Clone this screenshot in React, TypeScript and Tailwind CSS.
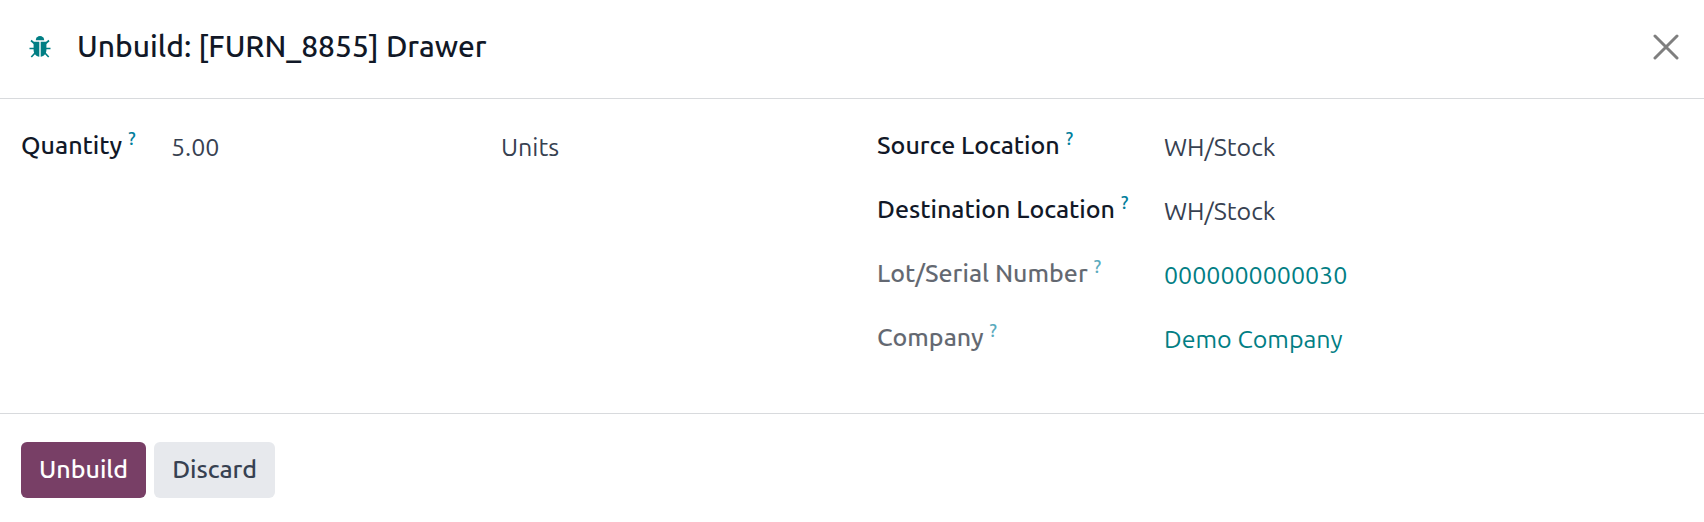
import type { ReactNode } from "react";

function FieldLabel({ htmlFor, muted, children }: { htmlFor: string; muted?: boolean; children: ReactNode }) {
  return (
    <div className={"flex items-start gap-1.5 whitespace-nowrap " + (muted ? "opacity-65" : "")}>
      <label htmlFor={htmlFor} className="text-[25px] leading-8 font-medium text-[#111827]">
        {children}
      </label>
      <sup className="top-0 text-lg leading-[18px] font-medium text-[#017e9c]">?</sup>
    </div>
  );
}

const valueClass = "block h-9 w-full min-w-0 bg-transparent p-0 text-[25px] leading-9 text-[#374151] outline-none";
const linkClass = "text-[25px] leading-9 text-[#017e84]";

export default function App() {
  return (
    <div role="dialog" aria-labelledby="dialog-title" className="bg-white font-['Ubuntu','Noto_Sans',sans-serif]">
      <header className="flex items-center justify-between border-b border-[#d8dadd] px-[21px] pt-[22px] pb-[26px]">
        <div className="flex items-center">
          <button type="button" aria-label="Debug" className="flex w-[38px] justify-center text-[#017e84]">
            <svg viewBox="0 0 22 22" className="h-[22px] w-[22px]" fill="currentColor" aria-hidden="true">
              <path d="M6.8 4.2a4.2 4.2 0 0 1 8.4 0z" />
              <path d="M4.6 5.700H10.3v15C7 20.500 4.600 17.500 4.600 14zM11.700 5.700h5.700v8.300c0 3.500-2.400 6.500-5.700 6.700z" />
              <path
                d="M2 4.500 6 8M20 4.500 16 8M0.500 12.500H6M21.500 12.500H16M2.300 21 6.500 16.500M19.700 21 15.500 16.500"
                fill="none"
                stroke="currentColor"
                strokeWidth="1.700"
              />
            </svg>
          </button>
          <h1 id="dialog-title" className="pb-0.5 pl-[18px] text-[30px] leading-[48px] font-medium text-[#111827]">
            Unbuild: [FURN_8855] Drawer
          </h1>
        </div>
        <button type="button" aria-label="Close" className="p-1 text-[#7f7f7f]">
          <svg viewBox="0 0 26 26" className="h-[26px] w-[26px]" fill="none" stroke="currentColor" strokeWidth="3" strokeLinecap="round" aria-hidden="true">
            <path d="M2 2 24 24M24 2 2 24" />
          </svg>
        </button>
      </header>

      <main className="grid grid-cols-2 items-start gap-[50px] px-[21px] pt-[30px] pb-14">
        <div className="grid grid-cols-[150px_1fr]">
          <FieldLabel htmlFor="quantity">Quantity</FieldLabel>
          <div className="grid grid-cols-2 gap-1">
            <input id="quantity" defaultValue="5.00" className={valueClass} />
            <input aria-label="Unit of measure" defaultValue="Units" className={valueClass} />
          </div>
        </div>
        <div className="grid auto-rows-[36px] grid-cols-[287px_1fr] gap-y-7">
          <FieldLabel htmlFor="source">Source Location</FieldLabel>
          <input id="source" defaultValue="WH/Stock" className={valueClass} />
          <FieldLabel htmlFor="destination">Destination Location</FieldLabel>
          <input id="destination" defaultValue="WH/Stock" className={valueClass} />
          <FieldLabel htmlFor="lot" muted>Lot/Serial Number</FieldLabel>
          <a id="lot" href="#lot" className={linkClass}>0000000000030</a>
          <FieldLabel htmlFor="company" muted>Company</FieldLabel>
          <a id="company" href="#company" className={linkClass}>Demo Company</a>
        </div>
      </main>

      <footer className="flex gap-2 border-t border-[#d8dadd] px-[21px] py-7">
        <button type="button" className="h-14 rounded-md bg-[#783f66] px-[18px] text-[25px] font-medium text-white">
          Unbuild
        </button>
        <button type="button" className="h-14 rounded-md bg-[#e7e9ed] px-[18px] text-[25px] font-medium text-[#374151]">
          Discard
        </button>
      </footer>
    </div>
  );
}
